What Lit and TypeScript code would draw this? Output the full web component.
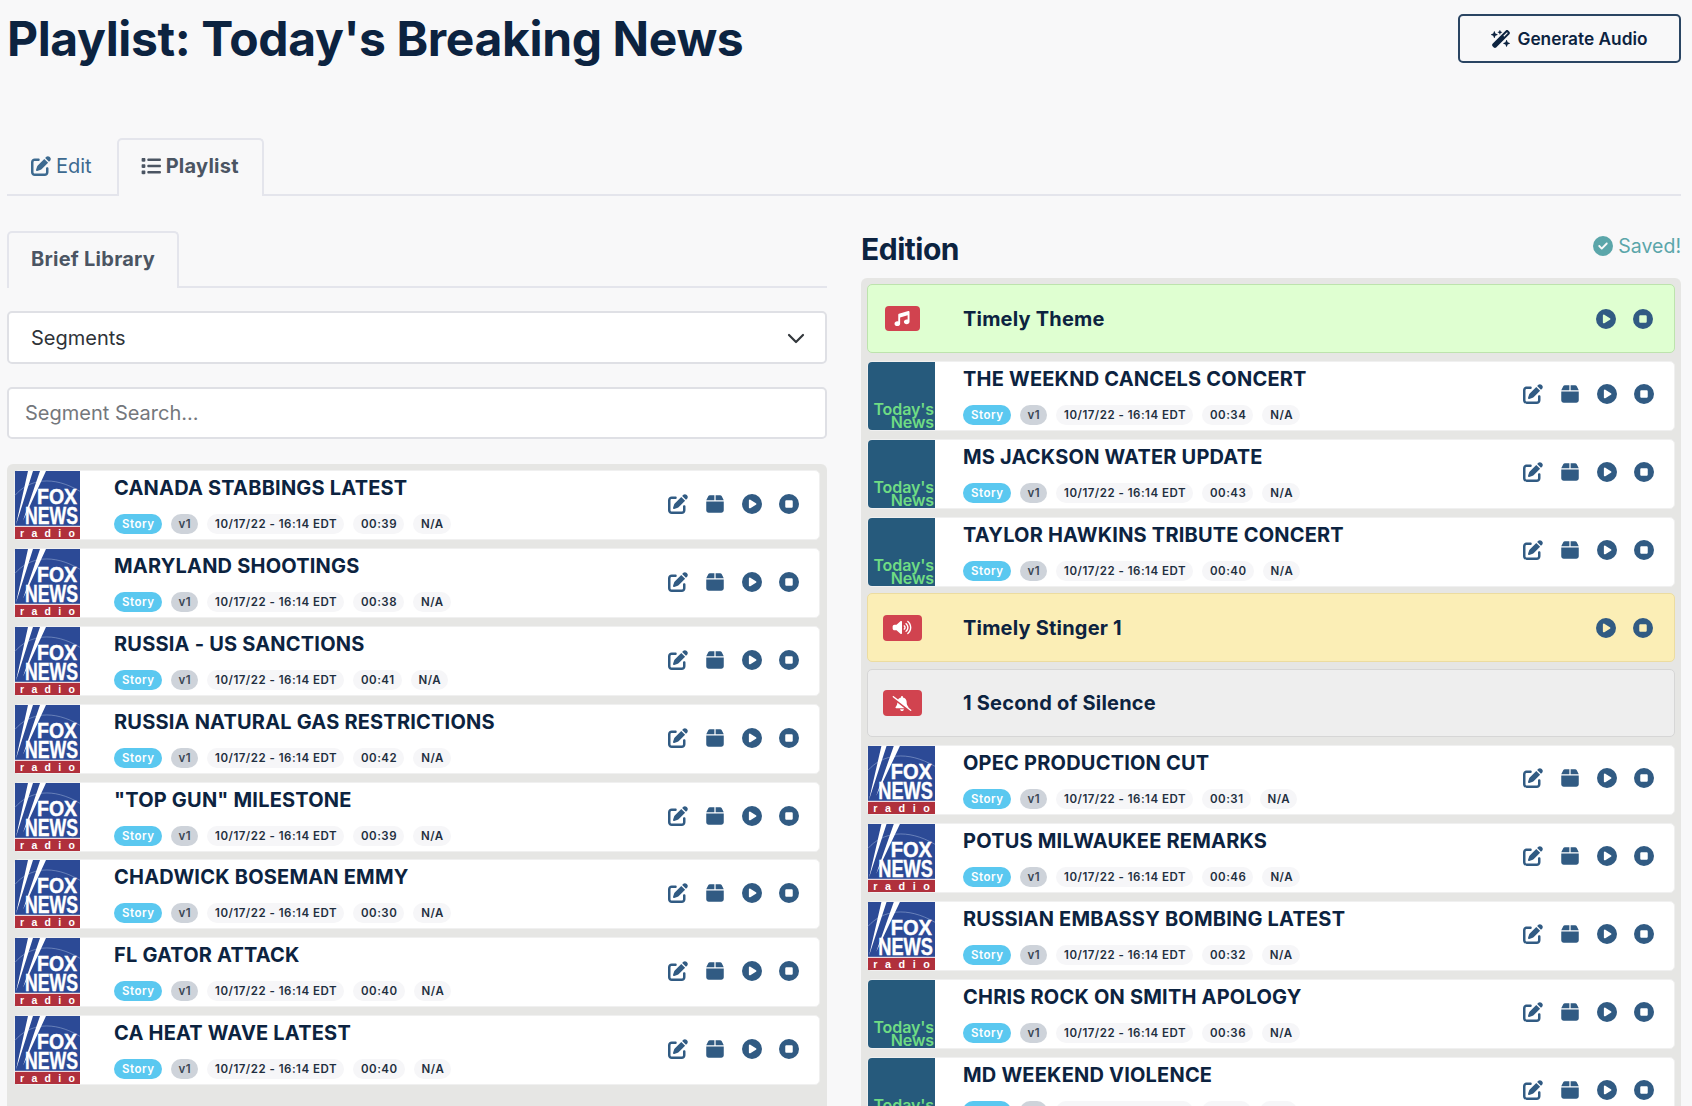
import { LitElement, html, css } from "lit";
import { customElement } from "lit/decorators.js";

const P = {
  edit: ["0 0 512 512", "M471.6 21.7c-21.9-21.9-57.3-21.9-79.2 0L362.3 51.7l97.9 97.9 30.1-30.1c21.9-21.9 21.9-57.3 0-79.2L471.6 21.7zm-299.2 220c-6.1 6.1-10.8 13.6-13.5 21.9l-29.6 88.8c-2.9 8.6-.6 18.1 5.8 24.6s15.9 8.7 24.6 5.8l88.8-29.6c8.2-2.7 15.7-7.4 21.9-13.5L437.7 172.3 339.7 74.3 172.4 241.7zM96 64C43 64 0 107 0 160V416c0 53 43 96 96 96H352c53 0 96-43 96-96V320c0-17.7-14.3-32-32-32s-32 14.3-32 32v96c0 17.7-14.3 32-32 32H96c-17.7 0-32-14.3-32-32V160c0-17.7 14.3-32 32-32h96c17.7 0 32-14.3 32-32s-14.3-32-32-32H96z"],
  box: ["0 0 448 512", "M50.7 58.5L0 160H208V32H93.7C75.5 32 58.9 42.3 50.7 58.5zM240 160H448L397.3 58.5C389.1 42.3 372.5 32 354.3 32H240V160zm208 32H0V416c0 35.3 28.7 64 64 64H384c35.3 0 64-28.7 64-64V192z"],
  play: ["0 0 512 512", "M0 256a256 256 0 1 1 512 0A256 256 0 1 1 0 256zM188.3 147.1c-7.6 4.2-12.3 12.3-12.3 20.9V344c0 8.7 4.7 16.7 12.3 20.9s16.8 4.1 24.3-.5l144-88c7.1-4.4 11.5-12.1 11.5-20.5s-4.4-16.1-11.5-20.5l-144-88c-7.4-4.5-16.7-4.7-24.3-.5z"],
  stop: ["0 0 512 512", "M256 512A256 256 0 1 0 256 0a256 256 0 1 0 0 512zM192 160H320c17.7 0 32 14.3 32 32V320c0 17.7-14.3 32-32 32H192c-17.7 0-32-14.3-32-32V192c0-17.7 14.3-32 32-32z"],
  list: ["0 0 512 512", "M40 48C26.7 48 16 58.7 16 72v48c0 13.3 10.7 24 24 24H88c13.3 0 24-10.7 24-24V72c0-13.3-10.7-24-24-24H40zM192 64c-17.7 0-32 14.3-32 32s14.3 32 32 32H480c17.7 0 32-14.3 32-32s-14.3-32-32-32H192zm0 160c-17.7 0-32 14.3-32 32s14.3 32 32 32H480c17.7 0 32-14.3 32-32s-14.3-32-32-32H192zm0 160c-17.7 0-32 14.3-32 32s14.3 32 32 32H480c17.7 0 32-14.3 32-32s-14.3-32-32-32H192zM16 232v48c0 13.3 10.7 24 24 24H88c13.3 0 24-10.7 24-24V232c0-13.3-10.7-24-24-24H40c-13.3 0-24 10.7-24 24zM40 368c-13.3 0-24 10.7-24 24v48c0 13.3 10.7 24 24 24H88c13.3 0 24-10.7 24-24V392c0-13.3-10.7-24-24-24H40z"],
  music: ["0 0 512 512", "M499.1 6.3c8.1 6 12.9 15.6 12.9 25.7v72V368c0 44.2-43 80-96 80s-96-35.8-96-80s43-80 96-80c11.2 0 22 1.6 32 4.6V147L192 223.8V432c0 44.2-43 80-96 80s-96-35.8-96-80s43-80 96-80c11.2 0 22 1.6 32 4.6V200 128c0-14.1 9.3-26.6 22.8-30.7l320-96c9.7-2.9 20.2-1.1 28.3 5z"],
  volume: ["0 0 640 512", "M533.6 32.5C598.5 85.2 640 165.8 640 256s-41.5 170.7-106.4 223.5c-10.3 8.4-25.4 6.8-33.8-3.5s-6.8-25.4 3.5-33.8C557.5 398.2 592 331.2 592 256s-34.5-142.2-88.7-186.3c-10.3-8.4-11.8-23.5-3.5-33.8s23.5-11.8 33.8-3.5zM473.1 107c43.2 35.2 70.9 88.9 70.9 149s-27.7 113.8-70.9 149c-10.3 8.4-25.4 6.8-33.8-3.5s-6.8-25.4 3.5-33.8C475.3 341.3 496 301.1 496 256s-20.7-85.3-53.2-111.8c-10.3-8.4-11.8-23.5-3.5-33.8s23.5-11.8 33.8-3.5zm-60.5 74.5C434.1 199.1 448 225.9 448 256s-13.9 56.9-35.4 74.5c-10.3 8.4-25.4 6.8-33.8-3.5s-6.8-25.4 3.5-33.8C393.1 284.4 400 271 400 256s-6.9-28.4-17.7-37.3c-10.3-8.4-11.8-23.5-3.5-33.8s23.5-11.8 33.8-3.5zM301.1 34.8C312.6 40 320 51.4 320 64V448c0 12.6-7.4 24-18.9 29.2s-25 3.1-34.4-5.3L131.8 352H64c-35.3 0-64-28.7-64-64V224c0-35.3 28.7-64 64-64h67.8L266.7 40.1c9.4-8.4 22.9-10.4 34.4-5.3z"],
  bell: ["0 0 640 512", "M38.8 5.1C28.4-3.1 13.3-1.2 5.1 9.2S-1.2 34.7 9.2 42.9l592 464c10.4 8.2 25.5 6.3 33.7-4.1s6.3-25.5-4.1-33.7L542.6 400c2.7-7.8 1.3-16.5-3.9-23l-14.9-18.6C495.5 322.9 480 278.8 480 233.4V208c0-77.4-55-142-128-156.8V32c0-17.7-14.3-32-32-32s-32 14.3-32 32V51.2c-42.6 8.6-79 34.2-102 69.3L38.8 5.1zM406.2 416L160 222.1v11.4c0 45.4-15.5 89.5-43.8 124.9L101.3 377c-5.8 7.2-6.9 17.1-2.9 25.4s12.4 13.6 21.6 13.6H406.2zM384 448H320 256c0 17 6.7 33.3 18.7 45.3s28.3 18.7 45.3 18.7s33.3-6.7 45.3-18.7s18.7-28.3 18.7-45.3z"],
  wand: ["0 0 576 512", "M234.7 42.7L197 56.8c-3 1.1-5 4-5 7.2s2 6.1 5 7.2l37.7 14.1L248.8 123c1.1 3 4 5 7.2 5s6.1-2 7.2-5l14.1-37.7L315 71.2c3-1.1 5-4 5-7.2s-2-6.1-5-7.2L277.3 42.7 263.2 5c-1.1-3-4-5-7.2-5s-6.1 2-7.2 5L234.7 42.7zM46.1 395.4c-18.7 18.7-18.7 49.1 0 67.9l34.6 34.6c18.7 18.7 49.1 18.7 67.9 0L529.9 116.5c18.7-18.7 18.7-49.1 0-67.9L495.3 14.1c-18.7-18.7-49.1-18.7-67.9 0L46.1 395.4zM484.6 82.6l-105 105-23.3-23.3 105-105 23.3 23.3zM7.5 117.2C3 118.9 0 123.2 0 128s3 9.1 7.5 10.8L64 160l21.2 56.5c1.7 4.5 6 7.5 10.8 7.5s9.1-3 10.8-7.5L128 160l56.5-21.2c4.5-1.7 7.5-6 7.5-10.8s-3-9.1-7.5-10.8L128 96 106.8 39.5C105.1 35 100.8 32 96 32s-9.1 3-10.8 7.5L64 96 7.5 117.2zm352 256c-4.5 1.7-7.5 6-7.5 10.8s3 9.1 7.5 10.8L416 416l21.2 56.5c1.7 4.5 6 7.5 10.8 7.5s9.1-3 10.8-7.5L480 416l56.5-21.2c4.5-1.7 7.5-6 7.5-10.8s-3-9.1-7.5-10.8L480 352l-21.2-56.5c-1.7-4.5-6-7.5-10.8-7.5s-9.1 3-10.8 7.5L416 352l-56.5 21.2z"],
  check: ["0 0 512 512", "M256 512A256 256 0 1 0 256 0a256 256 0 1 0 0 512zM369 209L241 337c-9.4 9.4-24.6 9.4-33.9 0l-64-64c-9.4-9.4-9.4-24.6 0-33.9s24.6-9.4 33.9 0l47 47L335 175c9.4-9.4 24.6-9.4 33.9 0s9.4 24.6 0 33.9z"],
} as const;

const icon = (n: keyof typeof P, cls = "ic") =>
  html`<svg class=${cls} viewBox=${P[n][0]} fill="currentColor" aria-hidden="true"><path d=${P[n][1]}></path></svg>`;

const fox = () => html`<svg class="logo fox" viewBox="0 0 65 67" preserveAspectRatio="none">
  <rect width="65" height="67" fill="#fff"></rect>
  <rect width="65" height="54" fill="#2c4a96"></rect>
  <rect y="55" width="65" height="12" fill="#b0303c"></rect>
  <path d="M0 24C14 8 38 4 65 20" fill="none" stroke="#8ea3cf" stroke-width=".6"></path>
  <path d="M13 0h5L1 53zM25 0h6L8 49z" fill="#fff"></path>
  <text x="22" y="33" class="fx" textLength="40" lengthAdjust="spacingAndGlyphs">FOX</text>
  <text x="10" y="52" class="nw" textLength="53" lengthAdjust="spacingAndGlyphs">NEWS</text>
  <text x="5" y="65" class="rd" textLength="55">radio</text>
</svg>`;

const today = () => html`<div class="logo today"><span>Today's</span><span>News</span></div>`;

const actions = (mode: "full" | "play" | "none" = "full") =>
  mode === "none"
    ? ""
    : html`<div class="acts">
        ${mode === "full" ? html`<span class="slot">${icon("edit")}</span><span class="slot">${icon("box")}</span>` : ""}
        <span class="slot">${icon("play")}</span><span class="slot">${icon("stop")}</span>
      </div>`;

const row = (title: string, time: string, logo: "fox" | "today") => html`<div class="row">
  ${logo === "fox" ? fox() : today()}
  <div class="body">
    <div class="title">${title}</div>
    <div class="tags">
      <span class="tag story">Story</span><span class="tag ver">v1</span>
      <span class="tag">10/17/22 - 16:14 EDT</span><span class="tag">${time}</span><span class="tag">N/A</span>
    </div>
  </div>
  ${actions()}
</div>`;

const special = (cls: string, ic: keyof typeof P, title: string, big: boolean, mode: "play" | "none" = "play") => html`<div class="row special ${cls}">
  <div class="cue-wrap"><span class="cue ${big ? "big" : ""}">${icon(ic, "cue-ic")}</span></div>
  <div class="stitle">${title}</div>
  ${actions(mode)}
</div>`;

const LEFT: [string, string][] = [
  ["CANADA STABBINGS LATEST", "00:39"],
  ["MARYLAND SHOOTINGS", "00:38"],
  ["RUSSIA - US SANCTIONS", "00:41"],
  ["RUSSIA NATURAL GAS RESTRICTIONS", "00:42"],
  ['"TOP GUN" MILESTONE', "00:39"],
  ["CHADWICK BOSEMAN EMMY", "00:30"],
  ["FL GATOR ATTACK", "00:40"],
  ["CA HEAT WAVE LATEST", "00:40"],
];

@customElement("app-root")
export class AppRoot extends LitElement {
  static styles = css`
    :host {
      display: block;
      height: 1106px;
      overflow: hidden;
      background: #f8f8f9;
      font-family: Inter, "Liberation Sans", sans-serif;
      color: #0c2340;
    }
    .page { padding: 0 11px 0 7px; }
    .head { display: flex; justify-content: space-between; align-items: flex-start; height: 138px; }
    h1 { margin: 10px 0 0; font-size: 48px; line-height: 58px; font-weight: 700; color: #0c2340; letter-spacing: -0.37px; }
    .gen {
      margin-top: 14px; width: 223px; height: 49px; box-sizing: border-box;
      display: flex; align-items: center; justify-content: center; gap: 6px;
      border: 2px solid #2a4563; border-radius: 5px; font-size: 17.3px; font-weight: 600; color: #0c2340;
    }
    .gen svg { width: 20px; height: 18px; }
    .tabs { display: flex; border-bottom: 2px solid #e4e5ec; height: 58px; box-sizing: border-box; }
    .tab {
      box-sizing: border-box; height: 58px; padding: 0 23px 4px 22px; display: flex; align-items: center; gap: 5px;
      font-size: 20px; border: 2px solid transparent; border-bottom: none; border-radius: 5px 5px 0 0;
    }
    .tab .ic { width: 20px; height: 20px; }
    .tab.link { color: #3d6a90; }
    .tab.on { color: #4b5563; font-weight: 700; letter-spacing: 0.25px; border-color: #e4e5ec; background: #f8f8f9; height: 58px; }
    .tabs.sub .tab.on { padding: 0 22px 4px 22px; height: 57px; }
    .cols { display: grid; grid-template-columns: 820px 820px; gap: 34px; margin-top: 33px; }
    .tabs.sub { height: 57px; margin-top: 2px; }
    .sel, .search {
      box-sizing: border-box; background: #fff; border: 2px solid #dfe0e5; border-radius: 5px;
      font-size: 20px; display: flex; align-items: center;
    }
    .sel { height: 53px; margin-top: 23px; padding: 0 20px 0 22px; justify-content: space-between; color: #2f3338; }
    .sel svg { width: 18px; height: 12px; }
    .search { height: 52px; margin-top: 23px; padding-left: 16px; color: #74777c; }
    .panel { background: #e6e6e4; border-radius: 6px 6px 0 0; padding: 6px 7px 60px 7px; margin-top: 25px; display: flex; flex-direction: column; gap: 7.9px; }
    .ed-head { display: flex; justify-content: space-between; align-items: flex-start; height: 49px; }
    h2 { margin: 2px 0 0; font-size: 30px; font-weight: 700; line-height: 36px; letter-spacing: -0.5px; color: #0c2340; }
    .saved { display: flex; align-items: center; gap: 5px; font-size: 19.5px; line-height: 24px; color: #5ba6aa; margin-top: 5px; }
    .saved .ic { width: 20px; height: 20px; }
    .panel.right { margin-top: 0; padding: 6px 6px 0 6px; gap: 8px; }
    .row {
      display: flex; align-items: stretch; height: 70px; box-sizing: border-box; flex: none;
      background: #fff; border-radius: 5px; border: 1px solid #f0f0f0;
    }
    .logo { flex: none; display: block; height: 68px; border-radius: 4px 0 0 4px; }
    .fox { width: 65px; overflow: visible; }
    .right .fox { width: 67px; }
    .fx { font: 700 22px "Liberation Sans", sans-serif; fill: #fff; stroke: #fff; stroke-width: 0.5px; }
    .nw { font: 700 23px "Liberation Sans", sans-serif; fill: #fff; stroke: #fff; stroke-width: 0.4px; }
    .rd { font: 700 10.5px "Liberation Sans", sans-serif; fill: #fff; }
    .today {
      width: 67px; background: #265a7c; color: #6fdc84; font-size: 16px; font-weight: 600; line-height: 13px;
      display: flex; flex-direction: column; justify-content: flex-end; align-items: flex-end; padding: 0 1px 1px 0; box-sizing: border-box;
      letter-spacing: -0.1px;
    }
    .body { flex: 1; padding: 5px 0 0 34px; min-width: 0; }
    .right .body { padding-left: 28px; }
    .title { font-size: 20px; font-weight: 700; line-height: 24px; letter-spacing: 0.2px; color: #0c2340; white-space: nowrap; }
    .tags { display: flex; gap: 9px; margin-top: 14px; }
    .tag {
      height: 20px; padding: 0 7px 0 8px; border-radius: 10px; background: #f6f6f8; color: #1f2f40;
      font-size: 11.5px; font-weight: 600; line-height: 20px; letter-spacing: 0.5px; white-space: nowrap;
    }
    .tag.story { background: #5ac8f0; color: #fff; padding: 0 8px; }
    .tag.ver { background: #ced3da; color: #3a4654; padding: 0 7px; }
    .acts { display: flex; align-items: center; gap: 13px; padding: 0 18px 2px 0; color: #315b83; flex: none; }
    .right .acts { padding: 0 18px 4px 0; }
    .slot { width: 24px; display: flex; justify-content: center; }
    .slot .ic { width: 20px; height: 20px; display: block; }
    .special { height: 69px; }
    .cue-wrap { width: 68px; margin-right: 27px; flex: none; display: flex; justify-content: center; align-items: center; }
    .cue { width: 35px; height: 25px; border-radius: 4px; background: #d1434f; color: #fff; display: flex; align-items: center; justify-content: center; }
    .cue.big { width: 39px; height: 26px; }
    .cue-ic { width: 16px; height: 15px; }
    .cue.big .cue-ic { width: 20px; height: 15px; }
    .stitle { flex: 1; font-size: 20px; font-weight: 700; letter-spacing: 0.2px; display: flex; align-items: center; color: #0c2340; }
    .theme { background: #dfffd1; border-color: #bde3ad; }
    .stinger { background: #fbeeb6; border-color: #ecdca0; margin-top: -2px; }
    .silence { background: #eeeeee; border-color: #d6d6d6; margin-top: -1px; height: 68px; }
    .right .special .acts { padding: 0 19px 0 0; }
  `;

  render() {
    return html`<div class="page">
      <div class="head">
        <h1>Playlist: Today's Breaking News</h1>
        <div class="gen">${icon("wand")}<span>Generate Audio</span></div>
      </div>
      <div class="tabs">
        <div class="tab link">${icon("edit")}<span>Edit</span></div>
        <div class="tab on">${icon("list")}<span>Playlist</span></div>
      </div>
      <div class="cols">
        <div>
          <div class="tabs sub"><div class="tab on">Brief Library</div></div>
          <div class="sel"><span>Segments</span>
            <svg viewBox="0 0 18 12" fill="none" stroke="#33373c" stroke-width="2.2" stroke-linecap="round" stroke-linejoin="round"><path d="M2 3l7 7 7-7"></path></svg>
          </div>
          <div class="search">Segment Search...</div>
          <div class="panel">${LEFT.map(([t, d]) => row(t, d, "fox"))}</div>
        </div>
        <div>
          <div class="ed-head"><h2>Edition</h2><div class="saved">${icon("check")}<span>Saved!</span></div></div>
          <div class="panel right">
            ${special("theme", "music", "Timely Theme", false)}
            ${row("THE WEEKND CANCELS CONCERT", "00:34", "today")}
            ${row("MS JACKSON WATER UPDATE", "00:43", "today")}
            ${row("TAYLOR HAWKINS TRIBUTE CONCERT", "00:40", "today")}
            ${special("stinger", "volume", "Timely Stinger 1", true)}
            ${special("silence", "bell", "1 Second of Silence", true, "none")}
            ${row("OPEC PRODUCTION CUT", "00:31", "fox")}
            ${row("POTUS MILWAUKEE REMARKS", "00:46", "fox")}
            ${row("RUSSIAN EMBASSY BOMBING LATEST", "00:32", "fox")}
            ${row("CHRIS ROCK ON SMITH APOLOGY", "00:36", "today")}
            ${row("MD WEEKEND VIOLENCE", "00:41", "today")}
          </div>
        </div>
      </div>
    </div>`;
  }
}
